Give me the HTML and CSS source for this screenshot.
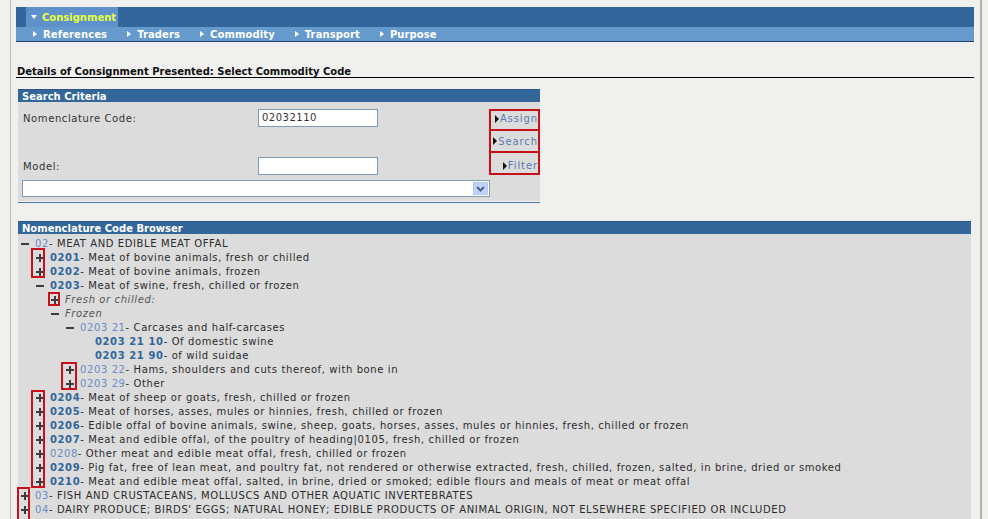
FILE: index.html
```html
<!DOCTYPE html>
<html>
<head>
<meta charset="utf-8">
<title>Consignment - Select Commodity Code</title>
<link rel="stylesheet" href="styles.css">
</head>
<body>
<div class="frame">
  <div class="nav">
    <div class="tabs">
      <span class="tab"><i class="tri-down"></i>Consignment</span>
    </div>
    <div class="subtabs">
      <span class="sub"><i class="tri-right"></i>References</span>
      <span class="sub"><i class="tri-right"></i>Traders</span>
      <span class="sub"><i class="tri-right"></i>Commodity</span>
      <span class="sub"><i class="tri-right"></i>Transport</span>
      <span class="sub"><i class="tri-right"></i>Purpose</span>
    </div>
  </div>

  <h1 class="title">Details of Consignment Presented: Select Commodity Code</h1>

  <section class="panel search">
    <div class="panel-head">Search Criteria</div>
    <div class="search-body">
      <div class="fields">
        <div class="field-row">
          <label class="label">Nomenclature Code:</label>
          <div class="input">02032110</div>
        </div>
        <div class="field-gap"></div>
        <div class="field-row">
          <label class="label">Model:</label>
          <div class="input"></div>
        </div>
        <div class="select">
          <span class="select-btn"><svg width="9" height="6" viewBox="0 0 9 6"><path d="M1 1l3.5 3.5L8 1" fill="none" stroke="#4d6185" stroke-width="2"/></svg></span>
        </div>
      </div>
      <div class="buttons">
        <span class="btn btn-assign"><i class="tri-btn"></i>Assign</span>
        <span class="btn btn-search"><i class="tri-btn"></i>Search</span>
        <span class="btn btn-filter"><i class="tri-btn"></i>Filter</span>
      </div>
    </div>
  </section>

  <section class="panel browser">
    <div class="panel-head">Nomenclature Code Browser</div>
    <div class="tree">
      <div class="row l0"><span class="exp minus"></span><span class="code">02</span><span class="desc">- MEAT AND EDIBLE MEAT OFFAL</span></div>
      <div class="row l1"><span class="exp plus"></span><span class="code b">0201</span><span class="desc">- Meat of bovine animals, fresh or chilled</span></div>
      <div class="row l1"><span class="exp plus"></span><span class="code b">0202</span><span class="desc">- Meat of bovine animals, frozen</span></div>
      <div class="row l1"><span class="exp minus"></span><span class="code b">0203</span><span class="desc">- Meat of swine, fresh, chilled or frozen</span></div>
      <div class="row l2"><span class="exp plus"></span><span class="note">Fresh or chilled:</span></div>
      <div class="row l2"><span class="exp minus"></span><span class="note">Frozen</span></div>
      <div class="row l3"><span class="exp minus"></span><span class="code">0203 21</span><span class="desc">- Carcases and half-carcases</span></div>
      <div class="row l4"><span class="code b">0203 21 10</span><span class="desc">- Of domestic swine</span></div>
      <div class="row l4"><span class="code b">0203 21 90</span><span class="desc">- of wild suidae</span></div>
      <div class="row l3"><span class="exp plus"></span><span class="code">0203 22</span><span class="desc">- Hams, shoulders and cuts thereof, with bone in</span></div>
      <div class="row l3"><span class="exp plus"></span><span class="code">0203 29</span><span class="desc">- Other</span></div>
      <div class="row l1"><span class="exp plus"></span><span class="code b">0204</span><span class="desc">- Meat of sheep or goats, fresh, chilled or frozen</span></div>
      <div class="row l1"><span class="exp plus"></span><span class="code b">0205</span><span class="desc">- Meat of horses, asses, mules or hinnies, fresh, chilled or frozen</span></div>
      <div class="row l1"><span class="exp plus"></span><span class="code b">0206</span><span class="desc">- Edible offal of bovine animals, swine, sheep, goats, horses, asses, mules or hinnies, fresh, chilled or frozen</span></div>
      <div class="row l1"><span class="exp plus"></span><span class="code b">0207</span><span class="desc">- Meat and edible offal, of the poultry of heading|0105, fresh, chilled or frozen</span></div>
      <div class="row l1"><span class="exp plus"></span><span class="code">0208</span><span class="desc">- Other meat and edible meat offal, fresh, chilled or frozen</span></div>
      <div class="row l1"><span class="exp plus"></span><span class="code b">0209</span><span class="desc">- Pig fat, free of lean meat, and poultry fat, not rendered or otherwise extracted, fresh, chilled, frozen, salted, in brine, dried or smoked</span></div>
      <div class="row l1"><span class="exp plus"></span><span class="code b">0210</span><span class="desc">- Meat and edible meat offal, salted, in brine, dried or smoked; edible flours and meals of meat or meat offal</span></div>
      <div class="row l0"><span class="exp plus"></span><span class="code">03</span><span class="desc">- FISH AND CRUSTACEANS, MOLLUSCS AND OTHER AQUATIC INVERTEBRATES</span></div>
      <div class="row l0"><span class="exp plus"></span><span class="code">04</span><span class="desc">- DAIRY PRODUCE; BIRDS' EGGS; NATURAL HONEY; EDIBLE PRODUCTS OF ANIMAL ORIGIN, NOT ELSEWHERE SPECIFIED OR INCLUDED</span></div>

      <span class="mark mark-a"></span>
      <span class="mark mark-b"></span>
      <span class="mark mark-c"></span>
      <span class="mark mark-d"></span>
      <span class="mark mark-e"></span>
    </div>
  </section>
</div>
</body>
</html>
```

FILE: styles.css
```css
html, body {
  margin: 0;
  padding: 0;
  background: #f0f0ee;
}
body {
  font-family: "DejaVu Sans", Verdana, sans-serif;
  font-size: 10px;
  color: #2b2b2b;
  overflow: hidden;
}
.frame {
  margin-left: 10px;
  width: 958px;
  min-height: 530px;
  padding: 7px 6px 0 5px;
  border-left: 1px solid #b9b9ae;
  border-right: 2px solid #b3b3ad;
}

/* navigation */
.nav {
  border-bottom: 1px solid #e4f0fb;
}
.tabs {
  height: 20px;
  background: #33669a;
  padding-left: 10px;
  display: flex;
}
.tab {
  width: 92px;
  background: #5e91c9;
  color: #e8ff3c;
  font-weight: bold;
  font-size: 10px;
  display: flex;
  align-items: center;
  padding-left: 4px;
  box-sizing: border-box;
}
.tri-down {
  display: inline-block;
  width: 0;
  height: 0;
  border-left: 3px solid transparent;
  border-right: 3px solid transparent;
  border-top: 4px solid #ffffff;
  margin: 0 5px 0 1px;
}
.subtabs {
  height: 14px;
  background: #6699cc;
  border-bottom: 1px solid #2d4262;
  display: flex;
  align-items: center;
  padding-left: 17px;
  gap: 20px;
}
.sub {
  color: #ffffff;
  font-weight: bold;
  font-size: 10px;
  letter-spacing: 0.1px;
  display: flex;
  align-items: center;
}
.tri-right {
  display: inline-block;
  width: 0;
  height: 0;
  border-top: 3px solid transparent;
  border-bottom: 3px solid transparent;
  border-left: 4px solid #ffffff;
  margin-right: 6px;
}

/* title */
.title {
  margin: 23px 0 0 0;
  padding: 0 0 0 1px;
  font-size: 10px;
  font-weight: bold;
  color: #111;
  line-height: 11px;
  border-bottom: 1px solid #000;
}

/* panels */
.panel {
  margin-left: 2px;
}
.panel-head {
  height: 13px;
  line-height: 13px;
  background: #336699;
  color: #ffffff;
  font-weight: bold;
  font-size: 10px;
  padding-left: 4px;
  border-top: 1px solid #2b5786;
  box-sizing: border-box;
}
.search {
  width: 522px;
  margin-top: 11px;
  border-bottom: 1px solid #4a74a4;
}
.search-body {
  background: #dcdcdc;
  display: flex;
  padding: 7px 0 4px 4px;
  border-bottom: 1px solid #f4f4f4;
}
.fields {
  width: 467px;
}
.field-row {
  display: flex;
  align-items: center;
  height: 18px;
}
.label {
  width: 236px;
  padding-left: 1px;
  box-sizing: border-box;
  color: #333;
  letter-spacing: 0.6px;
}
.input {
  width: 120px;
  height: 18px;
  box-sizing: border-box;
  background: #fff;
  border: 1px solid #7f9db9;
  padding: 2px 3px;
  line-height: 12px;
  letter-spacing: 0.5px;
  color: #333;
}
.field-gap {
  height: 30px;
}
.select {
  margin-top: 5px;
  width: 468px;
  height: 17px;
  box-sizing: border-box;
  background: #fff;
  border: 1px solid #7f9db9;
  display: flex;
  justify-content: flex-end;
  padding: 1px;
}
.select-btn {
  width: 15px;
  background: #c1d3fb;
  border: 1px solid #b4c8f0;
  box-sizing: border-box;
  display: flex;
  align-items: center;
  justify-content: center;
}
.buttons {
  width: 51px;
  display: flex;
  flex-direction: column;
}
.btn {
  height: 22px;
  box-sizing: border-box;
  border: 2px solid #c8101a;
  display: flex;
  align-items: center;
  justify-content: flex-end;
  padding-right: 0;
  color: #5a79b0;
  letter-spacing: 0.9px;
}
.btn + .btn {
  margin-top: -2px;
  height: 24px;
}
.btn-assign { padding-bottom: 3px; }
.btn-filter { padding-top: 5px; }
.tri-btn {
  display: inline-block;
  width: 0;
  height: 0;
  border-top: 4px solid transparent;
  border-bottom: 4px solid transparent;
  border-left: 4px solid #111;
  margin-right: 1px;
}

/* browser */
.browser {
  width: 953px;
  margin-top: 18px;
}
.tree {
  position: relative;
  background: #dcdcdc;
  padding-top: 3px;
  min-height: 300px;
}
.row {
  height: 14px;
  display: flex;
  align-items: center;
  white-space: nowrap;
  line-height: 14px;
  letter-spacing: 0.6px;
}
.l0 { padding-left: 1px; }
.l1 { padding-left: 16px; }
.l2 { padding-left: 31px; }
.l3 { padding-left: 46px; }
.l4 { padding-left: 77px; }
.exp {
  width: 16px;
  height: 14px;
  flex: none;
  position: relative;
}
.exp::before,
.exp::after {
  content: "";
  position: absolute;
  background: #3c3c3c;
}
.exp::before {
  left: 2px;
  top: 6px;
  width: 8px;
  height: 2px;
}
.plus::after {
  left: 5px;
  top: 3px;
  width: 2px;
  height: 8px;
}
.minus::after {
  display: none;
}
.code {
  color: #6a8cc4;
}
.code.b {
  color: #33669a;
  font-weight: bold;
}
.desc {
  color: #2b2b2b;
}
.note {
  color: #555;
  font-style: italic;
}

/* annotation marks */
.mark {
  position: absolute;
  box-sizing: border-box;
  border: 2px solid #c8101a;
}
.mark-a { left: 13px; top: 14px; width: 14px; height: 30px; }
.mark-b { left: 30px; top: 58px; width: 12px; height: 14px; }
.mark-c { left: 43px; top: 128px; width: 16px; height: 28px; }
.mark-d { left: 13px; top: 156px; width: 14px; height: 98px; }
.mark-e { left: -1px; top: 253px; width: 13px; height: 60px; }
```
